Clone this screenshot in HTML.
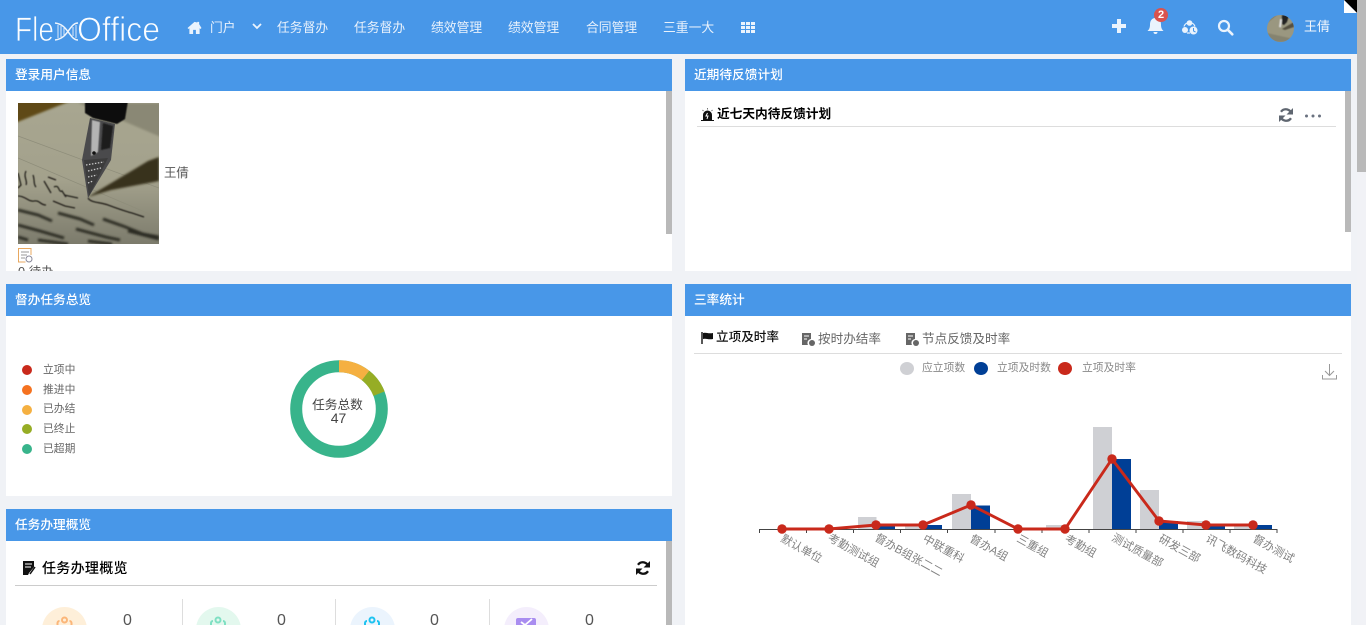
<!DOCTYPE html>
<html lang="zh"><head><meta charset="utf-8"><title>FlexOffice</title>
<style>
*{box-sizing:border-box}
html,body{margin:0;padding:0;width:1366px;height:625px;overflow:hidden;background:#f0f2f6;font-family:"Liberation Sans","Noto Sans CJK SC",sans-serif;font-size:12.7px;color:#555}
.a{position:absolute;white-space:nowrap;line-height:18px}
.blue{background:#4897e8}
.nav{color:#e9f2fc;top:19px;font-size:12.800px}
.panel{position:absolute;background:#fff}
.ph{position:absolute;left:0;top:0;right:0;height:32px;background:#4897e8;color:#fff;font-size:12.700px;line-height:32px;padding-left:9px;font-weight:500}
.sb{position:absolute;background:#b9b9b9}
svg{position:absolute;overflow:visible}
.lg{font-size:10.800px;color:#666;left:43px}
.dot{position:absolute;width:10px;height:10px;border-radius:50%;left:22px}
.t11{font-size:10.800px;color:#888}
</style></head><body>
<div class="a blue" style="left:0;top:0;width:1357px;height:54px"></div>
<svg style="left:0;top:0" width="180" height="54">
<g font-family="Liberation Sans" font-size="34" fill="#fbfdff" stroke="#4897e8" stroke-width=".85">
<text x="15" y="41" textLength="39" lengthAdjust="spacingAndGlyphs">Fle</text>
<text x="77" y="41" textLength="83" lengthAdjust="spacingAndGlyphs">Office</text>
</g>
<path d="M55 23c8 1 11 6 14 10s5 7 9 7M55 40c8-1 11-6 14-10s5-7 9-7" fill="none" stroke="#eef5fd" stroke-width="1.500"/>
<path d="M58 25v13M61 26v11M64 28v7M73 27v9M76 25v13" stroke="#dbe9fa" stroke-width="1"/>
</svg>
<svg style="left:187px;top:21px" width="15" height="13" viewBox="0 0 15 14"><path d="M7.500 1L0 7.600l1 1 1-.8V14h4V9.500h3V14h4V7.800l1 .8 1-1L12.500 3.300V1h-2v.6L7.500 1z" fill="#eaf3fd"/></svg>
<div class="a nav" style="left:210px">门户</div>
<svg style="left:252px;top:23px" width="10" height="7"><path d="M1 1l4 4 4-4" fill="none" stroke="#eaf3fd" stroke-width="1.800"/></svg>
<div class="a nav" style="left:277px">任务督办</div>
<div class="a nav" style="left:354px">任务督办</div>
<div class="a nav" style="left:431px">绩效管理</div>
<div class="a nav" style="left:508px">绩效管理</div>
<div class="a nav" style="left:586px">合同管理</div>
<div class="a nav" style="left:663px">三重一大</div>
<svg style="left:741px;top:22px" width="14" height="11" fill="#eaf3fd"><path d="M0 0h4v3H0zM5 0h4v3H5zM10 0h4v3h-4zM0 4h4v3H0zM5 4h4v3H5zM10 4h4v3h-4zM0 8h4v3H0zM5 8h4v3H5zM10 8h4v3h-4z"/></svg>
<svg style="left:1112px;top:19px" width="14" height="14"><path d="M5 0h4v5h5v4H9v5H5V9H0V5h5z" fill="#eaf3fd"/></svg>
<svg style="left:1147px;top:17px" width="17" height="19"><path d="M8.500 1c3.800 0 5.500 3 5.500 6.500 0 3.500 1 5 2.500 6.500H.5C2 12.500 3 11 3 7.500 3 4 4.700 1 8.500 1zM6.500 15h4a2 2 0 0 1-4 0z" fill="#eaf3fd"/></svg>
<div class="a" style="left:1154px;top:8px;width:14px;height:14px;border-radius:50%;background:#d9534f;color:#fff;font:bold 11px/14px 'Liberation Sans';text-align:center">2</div>
<svg style="left:1182px;top:20px" width="16" height="15"><circle cx="7.500" cy="3" r="2.800" fill="#eaf3fd"/><circle cx="3" cy="10" r="3" fill="#eaf3fd"/><circle cx="11.500" cy="10.500" r="4" fill="#eaf3fd"/><path d="M2 6.500a6 6 0 0 1 3-3.500M13 6.500A6 6 0 0 0 10 3M5 13h3" stroke="#eaf3fd" fill="none" stroke-width="1.200"/><path d="M11.500 8v3l2 1" stroke="#4897e8" fill="none"/></svg>
<svg style="left:1217px;top:19px" width="17" height="17"><circle cx="7" cy="7" r="5" fill="none" stroke="#eaf3fd" stroke-width="2.200"/><path d="M10.800 10.800l4.500 4.500" stroke="#eaf3fd" stroke-width="2.600" stroke-linecap="round"/></svg>
<svg style="left:1267px;top:15px" width="27" height="27" viewBox="0 0 27 27"><defs><clipPath id="av"><circle cx="13.500" cy="13.500" r="13.500"/></clipPath><filter id="b3"><feGaussianBlur stdDeviation=".5"/></filter></defs><g clip-path="url(#av)"><rect width="27" height="27" fill="#9a9780"/><g filter="url(#b3)"><path d="M0 0h10L0 8z" fill="#7d7860"/><path d="M15 0h7l-2 7-3 3-2-1z" fill="#222"/><path d="M13 4l2 .5-1 8-2-.5z" fill="#ddd"/><path d="M15 14l12-7v5l-9 3z" fill="#555040"/><path d="M0 18l27 6v3H0z" fill="#85836f"/></g></g></svg>
<div class="a" style="left:1304px;top:18px;color:#f2f7fd;font-size:13px">王倩</div>

<div class="a" style="left:1357px;top:0;width:9px;height:625px;background:#f1f2f6"></div>
<div class="a" style="left:1357px;top:0;width:9px;height:172px;background:#b9b9b9"></div>
<svg style="left:1344px;top:0" width="13" height="13"><path d="M0 0h13v13z" fill="#000"/><path d="M0 0v13h13z" fill="#fff"/></svg>

<!-- panel 1 -->
<div class="panel" style="left:6px;top:59px;width:666px;height:212px;overflow:hidden">
<div class="ph">登录用户信息</div>
<div class="sb" style="left:660px;top:32px;width:6px;height:143px"></div>
<svg style="left:12px;top:44px" width="141" height="141" viewBox="0 0 141 141">
<defs><linearGradient id="pg" x1="0" y1="0" x2="0" y2="1"><stop offset="0" stop-color="#a8a690"/><stop offset=".55" stop-color="#a3a18c"/><stop offset="1" stop-color="#7c7b6c"/></linearGradient>
<filter id="bl"><feGaussianBlur stdDeviation="1.100"/></filter><filter id="bl2"><feGaussianBlur stdDeviation=".5"/></filter><clipPath id="pc"><rect width="141" height="141"/></clipPath></defs>
<g clip-path="url(#pc)">
<rect width="141" height="141" fill="url(#pg)"/>
<path d="M-3-3h58L-3 20z" fill="#5f4a12" filter="url(#bl)"/>
<path d="M60 0h85v35L110 20z" fill="#8a8874" filter="url(#bl)"/>
<path d="M0 55l141 60M0 33l141 52" stroke="#8e8d7a" stroke-width=".7" fill="none"/>
<path d="M70 94L130 58l11-4v24l-48 9z" fill="#38311a" filter="url(#bl)"/>
<g fill="none" stroke="#25241f" stroke-width="1.300" filter="url(#bl2)">
<path d="M0 70l3 12-3 3M8 68c-3 6 2 10 0 14M15 72c2 5 0 9 3 12M26 78l7 12M36 84c6-3 4 6 8 4l4 6"/>
<path d="M0 93c8 0 10 6 16 5s6 4 12 4M35 98l12 5 10 2M70 95c3 5 12 4 20 7s16 6 24 8l12 4"/>
<path d="M30 74l8 3M46 92l14 3"/>
</g>
<g fill="none" stroke="#2a2924" stroke-width="2.800" filter="url(#bl)">
<path d="M0 107l20 5 14 6M40 110l22 6 14 6M85 116l20 7 20 8 16 3M0 122l22 6 24 7M58 126l30 8 14 3M110 128l31 8M20 137l30 4M0 134l10 3M70 138l24 3"/>
</g>
<path d="M67 -2h43l-3 18-8 5-24-6-8-5z" fill="#0e0e0e" filter="url(#bl2)"/>
<path d="M72 15l25 6-4 36-23 38-6-38z" fill="#4a4a4c"/>
<path d="M74 17l8 2-2 30-7 4z" fill="#b4b4b4" filter="url(#bl2)"/>
<path d="M85 20l10 3-3 22-9 2z" fill="#1e1e1e" filter="url(#bl2)"/>
<path d="M66 57l24-2-19 38z" fill="#3c3c3c"/>
<path d="M68 62l18-3M70 68l13-3M70 74l9-2M70 80l5-2" stroke="#c8c8c8" stroke-width="1.300" stroke-dasharray="1.500 1.500"/>
<circle cx="76" cy="50" r="1.800" fill="#111"/>
</g></svg>
<div class="a" style="left:158px;top:105px;font-size:12.400px">王倩</div>
<svg style="left:12px;top:189px" width="15" height="15" fill="none"><path d="M13 7V.5H.5v13.500h7" stroke="#e8a860"/><path d="M3 4h8M3 7h6M3 10h4" stroke="#999"/><circle cx="11" cy="11" r="3" stroke="#889"/></svg>
<div class="a" style="left:12px;top:204px">0 待办</div>
</div>

<!-- panel 2 -->
<div class="panel" style="left:685px;top:59px;width:666px;height:212px;overflow:hidden">
<div class="ph">近期待反馈计划</div>
<div class="sb" style="left:660px;top:32px;width:6px;height:141px"></div>
<svg style="left:16px;top:49px" width="13" height="13"><path d="M2 12V7a4.500 4.500 0 0 1 9 0v5zM0 12h13v1H0z" fill="#111"/><path d="M6.500 5L5 8h2l-1 3" stroke="#fff" fill="none"/><path d="M6.500 0v1.500M1.500 2l1 1M11.500 2l-1 1" stroke="#777"/></svg>
<div class="a" style="left:32px;top:46px;font-size:12.700px;line-height:18px;color:#000;font-weight:700">近七天内待反馈计划</div>
<div class="a" style="left:12px;top:67px;width:639px;height:1px;background:#ddd"></div>
<svg style="left:594px;top:49px" width="14" height="14" viewBox="0 0 14 14" fill="none" stroke="#5f6670" stroke-width="2.300"><path d="M12.500 6A5.800 5.800 0 0 0 2 3.800M1.500 8A5.800 5.800 0 0 0 12 10.200"/><path d="M14 0v6.500H7.500z M0 14V7.500h6.500z" fill="#5f6670" stroke="none"/></svg>
<svg style="left:620px;top:55px" width="17" height="4" fill="#6a7280"><circle cx="1.500" cy="2" r="1.500"/><circle cx="8" cy="2" r="1.500"/><circle cx="14.500" cy="2" r="1.500"/></svg>
</div>

<!-- panel 3 -->
<div class="panel" style="left:6px;top:284px;width:666px;height:212px">
<div class="ph">督办任务总览</div>
</div>
<div class="dot" style="top:365px;background:#c9291b"></div><div class="a lg" style="top:361px">立项中</div>
<div class="dot" style="top:385px;background:#f57220"></div><div class="a lg" style="top:381px">推进中</div>
<div class="dot" style="top:405px;background:#f5b041"></div><div class="a lg" style="top:400px">已办结</div>
<div class="dot" style="top:424px;background:#96ad25"></div><div class="a lg" style="top:420px">已终止</div>
<div class="dot" style="top:444px;background:#38b48b"></div><div class="a lg" style="top:440px">已超期</div>
<svg style="left:290px;top:360px" width="98" height="98" viewBox="0 0 98 98">
<circle cx="49" cy="49" r="42.800" fill="none" stroke="#38b48b" stroke-width="12"/>
<path d="M49 6.200A42.800 42.800 0 0 1 75.600 15.500" fill="none" stroke="#f5b041" stroke-width="12"/>
<path d="M75.600 15.500A42.800 42.800 0 0 1 89 33.700" fill="none" stroke="#96ad25" stroke-width="12"/>
</svg>
<div class="a" style="left:288.500px;top:399px;width:98px;text-align:center;font-size:12.700px;line-height:13px;color:#444">任务总数<br><span style="font-size:14px;position:relative;left:1px">47</span></div>

<!-- panel 4 -->
<div class="panel" style="left:685px;top:284px;width:666px;height:341px"><div class="ph">三率统计</div></div>
<svg style="left:701px;top:332px" width="13" height="12"><path d="M1 0v12" stroke="#111" stroke-width="1.400"/><path d="M2 1c3-1 5 1 10 0v6c-5 1-7-1-10 0z" fill="#111"/></svg>
<div class="a" style="left:716px;top:328px;color:#111;font-weight:500;font-size:12.600px">立项及时率</div>
<svg style="left:802px;top:333px" width="13" height="13"><path d="M0 0h9v6a4 4 0 0 0-3 6H0z" fill="#666"/><path d="M2 3h5M2 6h3" stroke="#fff"/><circle cx="10" cy="10" r="3" fill="#666"/></svg>
<div class="a" style="left:818px;top:330px;color:#666;font-size:12.600px">按时办结率</div>
<svg style="left:906px;top:333px" width="13" height="13"><path d="M0 0h9v6a4 4 0 0 0-3 6H0z" fill="#666"/><path d="M2 3h5M2 6h3" stroke="#fff"/><circle cx="10" cy="10" r="3" fill="#666"/></svg>
<div class="a" style="left:922px;top:330px;color:#666;font-size:12.600px">节点反馈及时率</div>
<div class="a" style="left:694px;top:353px;width:648px;height:1px;background:#ddd"></div>
<div class="a" style="left:900px;top:362px;width:14px;height:13px;border-radius:50%;background:#cfd0d4"></div>
<div class="a t11" style="left:922px;top:359px">应立项数</div>
<div class="a" style="left:974px;top:362px;width:14px;height:13px;border-radius:50%;background:#003f96"></div>
<div class="a t11" style="left:997px;top:359px">立项及时数</div>
<div class="a" style="left:1058px;top:362px;width:14px;height:13px;border-radius:50%;background:#c9291b"></div>
<div class="a t11" style="left:1082px;top:359px">立项及时率</div>
<svg style="left:1322px;top:364px" width="15" height="16" fill="none" stroke="#999"><path d="M7.500 0v11M3 7l4.500 4.500L12 7M.5 11v4h14v-4"/></svg>

<svg style="left:0;top:0" width="1366" height="625">
<g fill="#cfd0d4"><rect x="858" y="517" width="18.500" height="12"/><rect x="905" y="525" width="18.500" height="4"/><rect x="952" y="494" width="19" height="35"/><rect x="1046" y="525" width="19" height="4"/><rect x="1093" y="427" width="19" height="102"/><rect x="1140" y="490" width="19" height="39"/><rect x="1187" y="521" width="19" height="8"/><rect x="1234" y="525" width="19" height="4"/></g>
<g fill="#003f96"><rect x="876" y="525" width="19" height="4"/><rect x="923" y="525" width="19" height="4"/><rect x="971" y="505.500" width="19" height="23.500"/><rect x="1112" y="459" width="19" height="70"/><rect x="1159" y="521" width="19" height="8"/><rect x="1206" y="525" width="19" height="4"/><rect x="1253" y="525" width="19" height="4"/></g>
<path d="M759 529.500h518M759.500 529v4M806.500 529v4M853.500 529v4M900.500 529v4M947.500 529v4M995 529v4M1042 529v4M1089 529v4M1136 529v4M1183 529v4M1230 529v4M1277 529v4" stroke="#444" fill="none"/>
<polyline points="782,529 829,529 876,525 923,525 971,505 1018,529 1065,529 1112,459 1159,521 1206,525 1253,525" fill="none" stroke="#c9291b" stroke-width="2.900"/>
<g fill="#c9291b"><circle cx="782" cy="529" r="4.700"/><circle cx="829" cy="529" r="4.700"/><circle cx="876" cy="525" r="4.700"/><circle cx="923" cy="525" r="4.700"/><circle cx="971" cy="505" r="4.700"/><circle cx="1018" cy="529" r="4.700"/><circle cx="1065" cy="529" r="4.700"/><circle cx="1112" cy="459" r="4.700"/><circle cx="1159" cy="521" r="4.700"/><circle cx="1206" cy="525" r="4.700"/><circle cx="1253" cy="525" r="4.700"/></g>
<g font-size="11.300" fill="#808080" font-family="'Liberation Sans','Noto Sans CJK SC',sans-serif">
<text transform="translate(780,541) rotate(29)">默认单位</text>
<text transform="translate(827,540) rotate(29)">考勤测试组</text>
<text transform="translate(874,540) rotate(29)">督办B组张二二</text>
<text transform="translate(922,541) rotate(29)">中联重科</text>
<text transform="translate(969,541) rotate(29)">督办A组</text>
<text transform="translate(1016,541) rotate(29)">三重组</text>
<text transform="translate(1064,541) rotate(29)">考勤组</text>
<text transform="translate(1111,540) rotate(29)">测试质量部</text>
<text transform="translate(1158,541) rotate(29)">研发三部</text>
<text transform="translate(1205,541) rotate(29)">讯飞数码科技</text>
<text transform="translate(1252,541) rotate(29)">督办测试</text>
</g></svg>

<!-- panel 5 -->
<div class="panel" style="left:6px;top:509px;width:666px;height:116px;overflow:hidden">
<div class="ph">任务办理概览</div>
<div class="sb" style="left:660px;top:32px;width:6px;height:84px"></div>
<svg style="left:17px;top:52px" width="13" height="14"><path d="M0 0h11v6l-5 6-1 2H0z" fill="#111"/><path d="M2 3h7M2 6h6" stroke="#fff"/><path d="M12 6l-5 7" stroke="#111" stroke-width="1.500"/></svg>
<div class="a" style="left:36px;top:50px;font-size:14px;letter-spacing:.3px;color:#000;font-weight:500">任务办理概览</div>
<svg style="left:630px;top:52px" width="14" height="14" viewBox="0 0 14 14" fill="none" stroke="#111" stroke-width="2.300"><path d="M12.500 6A5.800 5.800 0 0 0 2 3.800M1.500 8A5.800 5.800 0 0 0 12 10.200"/><path d="M14 0v6.500H7.500z M0 14V7.500h6.500z" fill="#111" stroke="none"/></svg>
<div class="a" style="left:9px;top:76px;width:642px;height:1px;background:#ccc"></div>
<div class="a" style="left:176px;top:90px;width:1px;height:30px;background:#ddd"></div>
<div class="a" style="left:329px;top:90px;width:1px;height:30px;background:#ddd"></div>
<div class="a" style="left:483px;top:90px;width:1px;height:30px;background:#ddd"></div>
<div class="a" style="left:36px;top:98px;width:45px;height:45px;border-radius:50%;background:#feefd9"></div>
<div class="a" style="left:190px;top:98px;width:45px;height:45px;border-radius:50%;background:#e3f8ee"></div>
<div class="a" style="left:344px;top:98px;width:45px;height:45px;border-radius:50%;background:#ebf4fd"></div>
<div class="a" style="left:498px;top:98px;width:45px;height:45px;border-radius:50%;background:#f4eefc"></div>
<svg style="left:0;top:0" width="660" height="116">
<g fill="none" stroke-width="2"><g stroke="#fbb679"><circle cx="58.500" cy="111" r="2.500"/><path d="M51.500 117v-3a2 2 0 0 1 2-2M65.500 117v-3a2 2 0 0 0-2-2"/></g>
<g stroke="#7fe0c3"><circle cx="212" cy="111" r="2.500"/><path d="M205 117v-3a2 2 0 0 1 2-2M219 117v-3a2 2 0 0 0-2-2"/></g>
<g stroke="#1fc3f0"><circle cx="366" cy="111" r="2.500"/><path d="M359 117v-3a2 2 0 0 1 2-2M373 117v-3a2 2 0 0 0-2-2"/></g></g>
<rect x="510" y="109" width="20" height="12" rx="2" fill="#a98df0"/><path d="M515 113l4 3 7-6" stroke="#fff" fill="none" stroke-width="1.800"/>
</svg>
<div class="a" style="left:117px;top:103px;font-size:16px;color:#555;font-weight:500">0</div>
<div class="a" style="left:271px;top:103px;font-size:16px;color:#555;font-weight:500">0</div>
<div class="a" style="left:424px;top:103px;font-size:16px;color:#555;font-weight:500">0</div>
<div class="a" style="left:579px;top:103px;font-size:16px;color:#555;font-weight:500">0</div>
</div>
</body></html>
